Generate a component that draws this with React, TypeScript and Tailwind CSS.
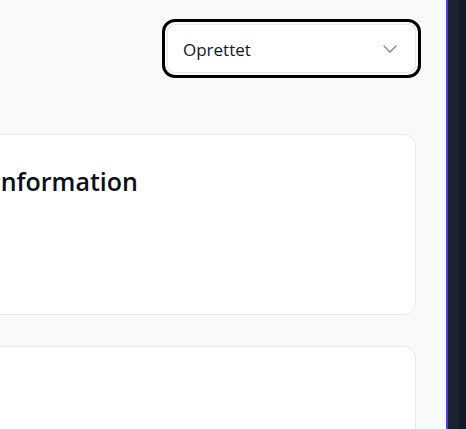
import React from 'react';

const Card: React.FC<{ title?: string; className?: string }> = ({ title, className = '' }) => {
  return (
    <section className={`rounded-xl border border-[#e5e7eb] bg-white px-6 pt-[30px] ${className}`}>
      {title && <h2 className="text-[25px] font-semibold leading-8 text-[#0b0f19]">{title}</h2>}
    </section>
  );
};

export default function App() {
  return (
    <div
      className="flex h-screen w-full overflow-hidden bg-[#f8f9fb]"
      style={{ fontFamily: '"Open Sans", "Noto Sans", sans-serif' }}
    >
      <main className="w-[446px] shrink-0 overflow-hidden pr-[30px]">
        <div className="flex justify-end pt-6">
          <button
            type="button"
            className="flex h-[49px] w-[249px] items-center justify-between rounded-lg border border-[#e5e7eb] bg-white pl-[15px] pr-[18px] text-[17px] text-[#111827] outline-[3px] outline-offset-2 outline-black"
          >
            <span className="pt-[3px]">Oprettet</span>
            <svg width="14" height="8" viewBox="0 0 14 8" fill="none">
              <polyline points="1,1 7,7 13,1" stroke="#7b8190" strokeWidth="1.3" strokeLinecap="round" strokeLinejoin="round" />
            </svg>
          </button>
        </div>

        <div className="-ml-[32px] mt-[61px] flex flex-col gap-[31px]">
          <Card title="Information" className="h-[181px]" />
          <Card className="h-[200px]" />
        </div>
      </main>

      <aside className="flex flex-1 border-l-2 border-[#4a3fd0] bg-[#1c2234]">
        <div className="ml-auto w-[7px] bg-[#111827]" />
      </aside>
    </div>
  );
}
